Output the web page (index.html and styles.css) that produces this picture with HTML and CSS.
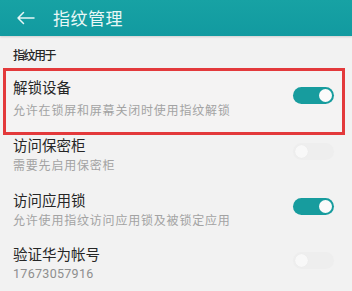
FILE: index.html
```html
<!DOCTYPE html>
<html lang="zh">
<head>
<meta charset="utf-8">
<link rel="stylesheet" href="styles.css">
</head>
<body>
<div class="screen">
  <header class="appbar">
    <svg class="back" width="19" height="14" viewBox="0 0 19 14"><path d="M18 7H2M7.5 1.5L2 7l5.5 5.5" fill="none" stroke="#e6f6f6" stroke-width="1.5" stroke-linecap="round" stroke-linejoin="round"/></svg>
    <span class="title">指纹管理</span>
  </header>
  <div class="label">指纹用于</div>
  <div class="highlight">
    <div class="row row--boxed">
      <div class="texts">
        <div class="name">解锁设备</div>
        <div class="desc desc--gap">允许在锁屏和屏幕关闭时使用指纹解锁</div>
      </div>
      <span class="switch on"></span>
    </div>
  </div>
  <div class="row row--a">
    <div class="texts">
      <div class="name">访问保密柜</div>
      <div class="desc">需要先启用保密柜</div>
    </div>
    <span class="switch off"></span>
  </div>
  <div class="row row--b">
    <div class="texts">
      <div class="name">访问应用锁</div>
      <div class="desc">允许使用指纹访问应用锁及被锁定应用</div>
    </div>
    <span class="switch on"></span>
  </div>
  <div class="row row--c">
    <div class="texts">
      <div class="name">验证华为帐号</div>
      <div class="desc desc--num">17673057916</div>
    </div>
    <span class="switch off"></span>
  </div>
</div>
</body>
</html>
```
FILE: styles.css
```css
html, body {
  margin: 0;
  padding: 0;
}
body {
  width: 352px;
  height: 291px;
  overflow: hidden;
  background: #f2f2f2;
  font-family: "Noto Sans CJK SC", "Noto Sans", sans-serif;
}
.screen {
  display: flex;
  flex-direction: column;
}
.appbar {
  height: 36px;
  background: linear-gradient(180deg, #17a2a4 0%, #129aa0 100%);
  display: flex;
  align-items: center;
  padding-left: 16px;
  gap: 18px;
  box-shadow: 0 1px 2px rgba(0,0,0,0.15);
}
.back {
  flex: none;
}
.title {
  color: #e8f7f6;
  font-size: 17px;
  line-height: 20px;
  letter-spacing: 0.5px;
}
.label {
  margin-top: 10px;
  padding-left: 13px;
  font-size: 12px;
  line-height: 18px;
  color: #262626;
  font-weight: 500;
  letter-spacing: -1.5px;
}
.highlight {
  margin: 4px 7px 0 3px;
  border: 3px solid #e3393b;
}
.row {
  display: flex;
  align-items: center;
  padding: 8px 18px 8px 13px;
}
.row--boxed {
  padding: 6px 8px 13px 7px;
  background: #f4f3f3;
}
.row--a { padding-top: 0; padding-bottom: 8px; }
.row--b { padding-top: 8px; padding-bottom: 7px; }
.row--c { padding-top: 8px; }
.texts {
  flex: 1;
  min-width: 0;
}
.name {
  font-size: 14.5px;
  line-height: 20px;
  color: #262626;
}
.desc {
  font-size: 12px;
  line-height: 19px;
  color: #a3a3a3;
  letter-spacing: 0.8px;
  white-space: nowrap;
}
.desc--gap { margin-top: 3px; }
.desc--num {
  font-family: "Roboto", "Noto Sans", sans-serif;
  font-size: 12.5px;
  color: #8e8e8e;
  letter-spacing: 0.3px;
}
.switch {
  flex: none;
  width: 41px;
  height: 17px;
  border-radius: 9px;
  position: relative;
  margin-top: -6px;
}
.switch::after {
  content: "";
  position: absolute;
  top: 2px;
  width: 13px;
  height: 13px;
  border-radius: 50%;
  background: #fbfbfb;
}
.switch.on {
  background: #179c9e;
}
.switch.on::after {
  right: 2px;
}
.switch.off {
  background: #eeeeee;
}
.switch.off::after {
  left: 2px;
  background: #f8f8f8;
  box-shadow: 0 0 1px rgba(0,0,0,0.06);
}
```
